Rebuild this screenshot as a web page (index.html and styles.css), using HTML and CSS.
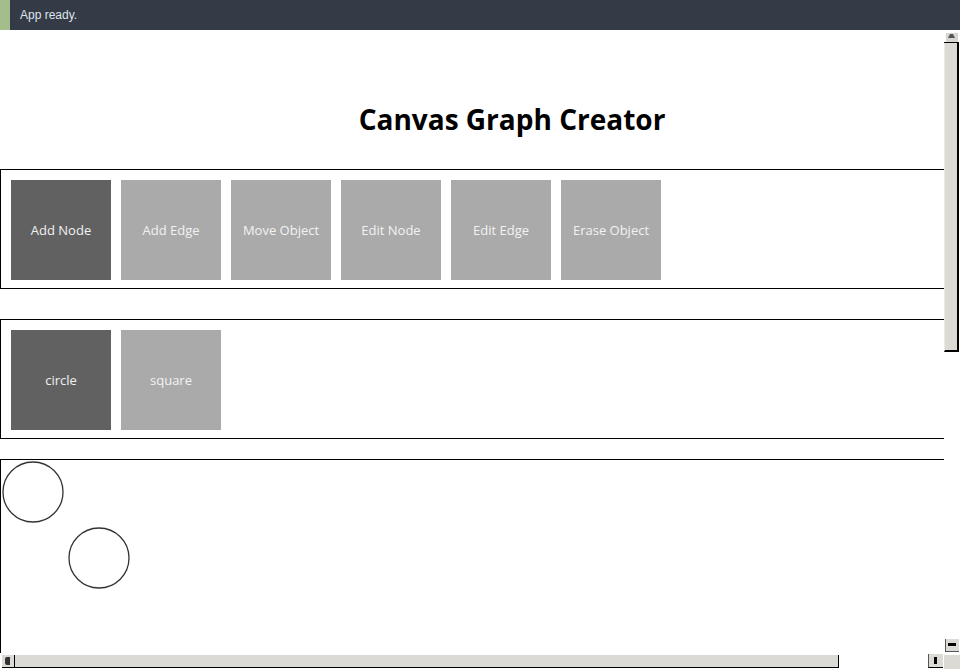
FILE: index.html
```html
<!DOCTYPE html>
<html lang="en">
<head>
<meta charset="utf-8">
<title>Canvas Graph Creator</title>
<link rel="stylesheet" href="styles.css">
</head>
<body>
<div class="status"><span class="status-accent"></span><span class="status-text">App ready.</span></div>
<div class="viewport">
<main class="page">
  <header class="header"><h1 class="title">Canvas Graph Creator</h1></header>
  <section class="panel tools">
    <button class="tool active">Add Node</button>
    <button class="tool">Add Edge</button>
    <button class="tool">Move Object</button>
    <button class="tool">Edit Node</button>
    <button class="tool">Edit Edge</button>
    <button class="tool">Erase Object</button>
  </section>
  <section class="panel shapes">
    <button class="tool active">circle</button>
    <button class="tool">square</button>
  </section>
  <section class="canvas">
    <svg class="graph" width="1022" height="500" viewBox="0 0 1022 500">
      <circle cx="32" cy="32" r="30" fill="none" stroke="#333" stroke-width="1.3"/>
      <circle cx="98" cy="98" r="30" fill="none" stroke="#333" stroke-width="1.3"/>
    </svg>
  </section>
</main>
</div>
<div class="sb v-up"><span class="v-up-glyph"></span></div>
<div class="sb v-line"></div>
<div class="sb v-thumb"></div>
<div class="sb v-down"><span class="v-down-glyph"></span></div>
<div class="sb corner"></div>
<div class="sb h-left"><span class="h-left-glyph"></span></div>
<div class="sb h-track"></div>
<div class="sb h-right"><span class="h-right-glyph"></span></div>
</body>
</html>
```
FILE: styles.css
```css
html, body {
  margin: 0;
  padding: 0;
  background: #fff;
  overflow: hidden;
  width: 960px;
  height: 669px;
}
.status {
  height: 30px;
  display: flex;
  align-items: center;
  background: #343b47;
  font-family: "Liberation Sans", Arial, sans-serif;
  font-size: 12px;
  color: #dfe3ea;
}
.status-accent {
  width: 10px;
  height: 30px;
  background: #a3be8c;
}
.status-text {
  margin-left: 10px;
}
.viewport {
  width: 944px;
  height: 623px;
  overflow: hidden;
}
.page {
  width: 1024px;
  font-family: "Open Sans", sans-serif;
}
.header {
  padding: 69px 0 30px;
}
.title {
  margin: 0;
  text-align: center;
  font-size: 28px;
  line-height: 40px;
  font-weight: 700;
  color: #000;
}
.panel {
  display: flex;
  gap: 10px;
  border: 1px solid #000;
  padding: 10px 10px 8px;
}
.shapes {
  margin-top: 30px;
}
.tool {
  width: 100px;
  height: 100px;
  border: 0;
  margin: 0;
  padding: 0;
  background: #aaaaaa;
  color: #f2f2f2;
  font-family: "Open Sans", sans-serif;
  font-size: 13px;
  display: flex;
  align-items: center;
  justify-content: center;
}
.tool.active {
  background: #616161;
}
.canvas {
  margin-top: 20px;
  border: 1px solid #000;
  height: 500px;
}
.graph {
  display: block;
}
.sb {
  position: fixed;
  box-sizing: border-box;
}
.v-up {
  left: 946px;
  top: 32px;
  width: 12px;
  height: 10px;
  background: #d8d6d0;
  border-top: 1px solid #fff;
}
.v-up-glyph {
  position: absolute;
  left: 2px;
  top: 1px;
  width: 7px;
  height: 4px;
  background: #555;
  clip-path: polygon(30% 0, 70% 0, 100% 100%, 0 100%);
}
.v-line {
  left: 944px;
  top: 42px;
  width: 15px;
  height: 1px;
  background: #000;
}
.v-thumb {
  left: 944px;
  top: 43px;
  width: 15px;
  height: 309px;
  background: #dcdad5;
  border-left: 1px solid #eceae6;
  border-right: 2px solid #000;
  border-bottom: 2px solid #000;
}
.v-down {
  left: 945px;
  top: 639px;
  width: 14px;
  height: 13px;
  background: #dcdad5;
  border-left: 1px solid #555;
  border-bottom: 1px solid #555;
}
.v-down-glyph {
  position: absolute;
  left: 2px;
  top: 4px;
  width: 8px;
  height: 3px;
  background: #000;
}
.corner {
  left: 944px;
  top: 655px;
  width: 16px;
  height: 14px;
  background: #dcdad5;
}
.h-left {
  left: 2px;
  top: 655px;
  width: 12px;
  height: 13px;
  background: #dcdad5;
  border-bottom: 1px solid #000;
}
.h-left-glyph {
  position: absolute;
  left: 3px;
  top: 2px;
  width: 5px;
  height: 8px;
  background: #333;
  border-radius: 2px 0 0 2px;
}
.h-track {
  left: 14px;
  top: 655px;
  width: 825px;
  height: 13px;
  background: #dcdad5;
  border-left: 1px solid #000;
  border-right: 1px solid #000;
  border-bottom: 1px solid #000;
}
.h-right {
  left: 928px;
  top: 654px;
  width: 15px;
  height: 14px;
  background: #dcdad5;
  border-left: 1px solid #555;
  border-bottom: 1px solid #000;
}
.h-right-glyph {
  position: absolute;
  left: 5px;
  top: 3px;
  width: 3px;
  height: 7px;
  background: #000;
}
```
